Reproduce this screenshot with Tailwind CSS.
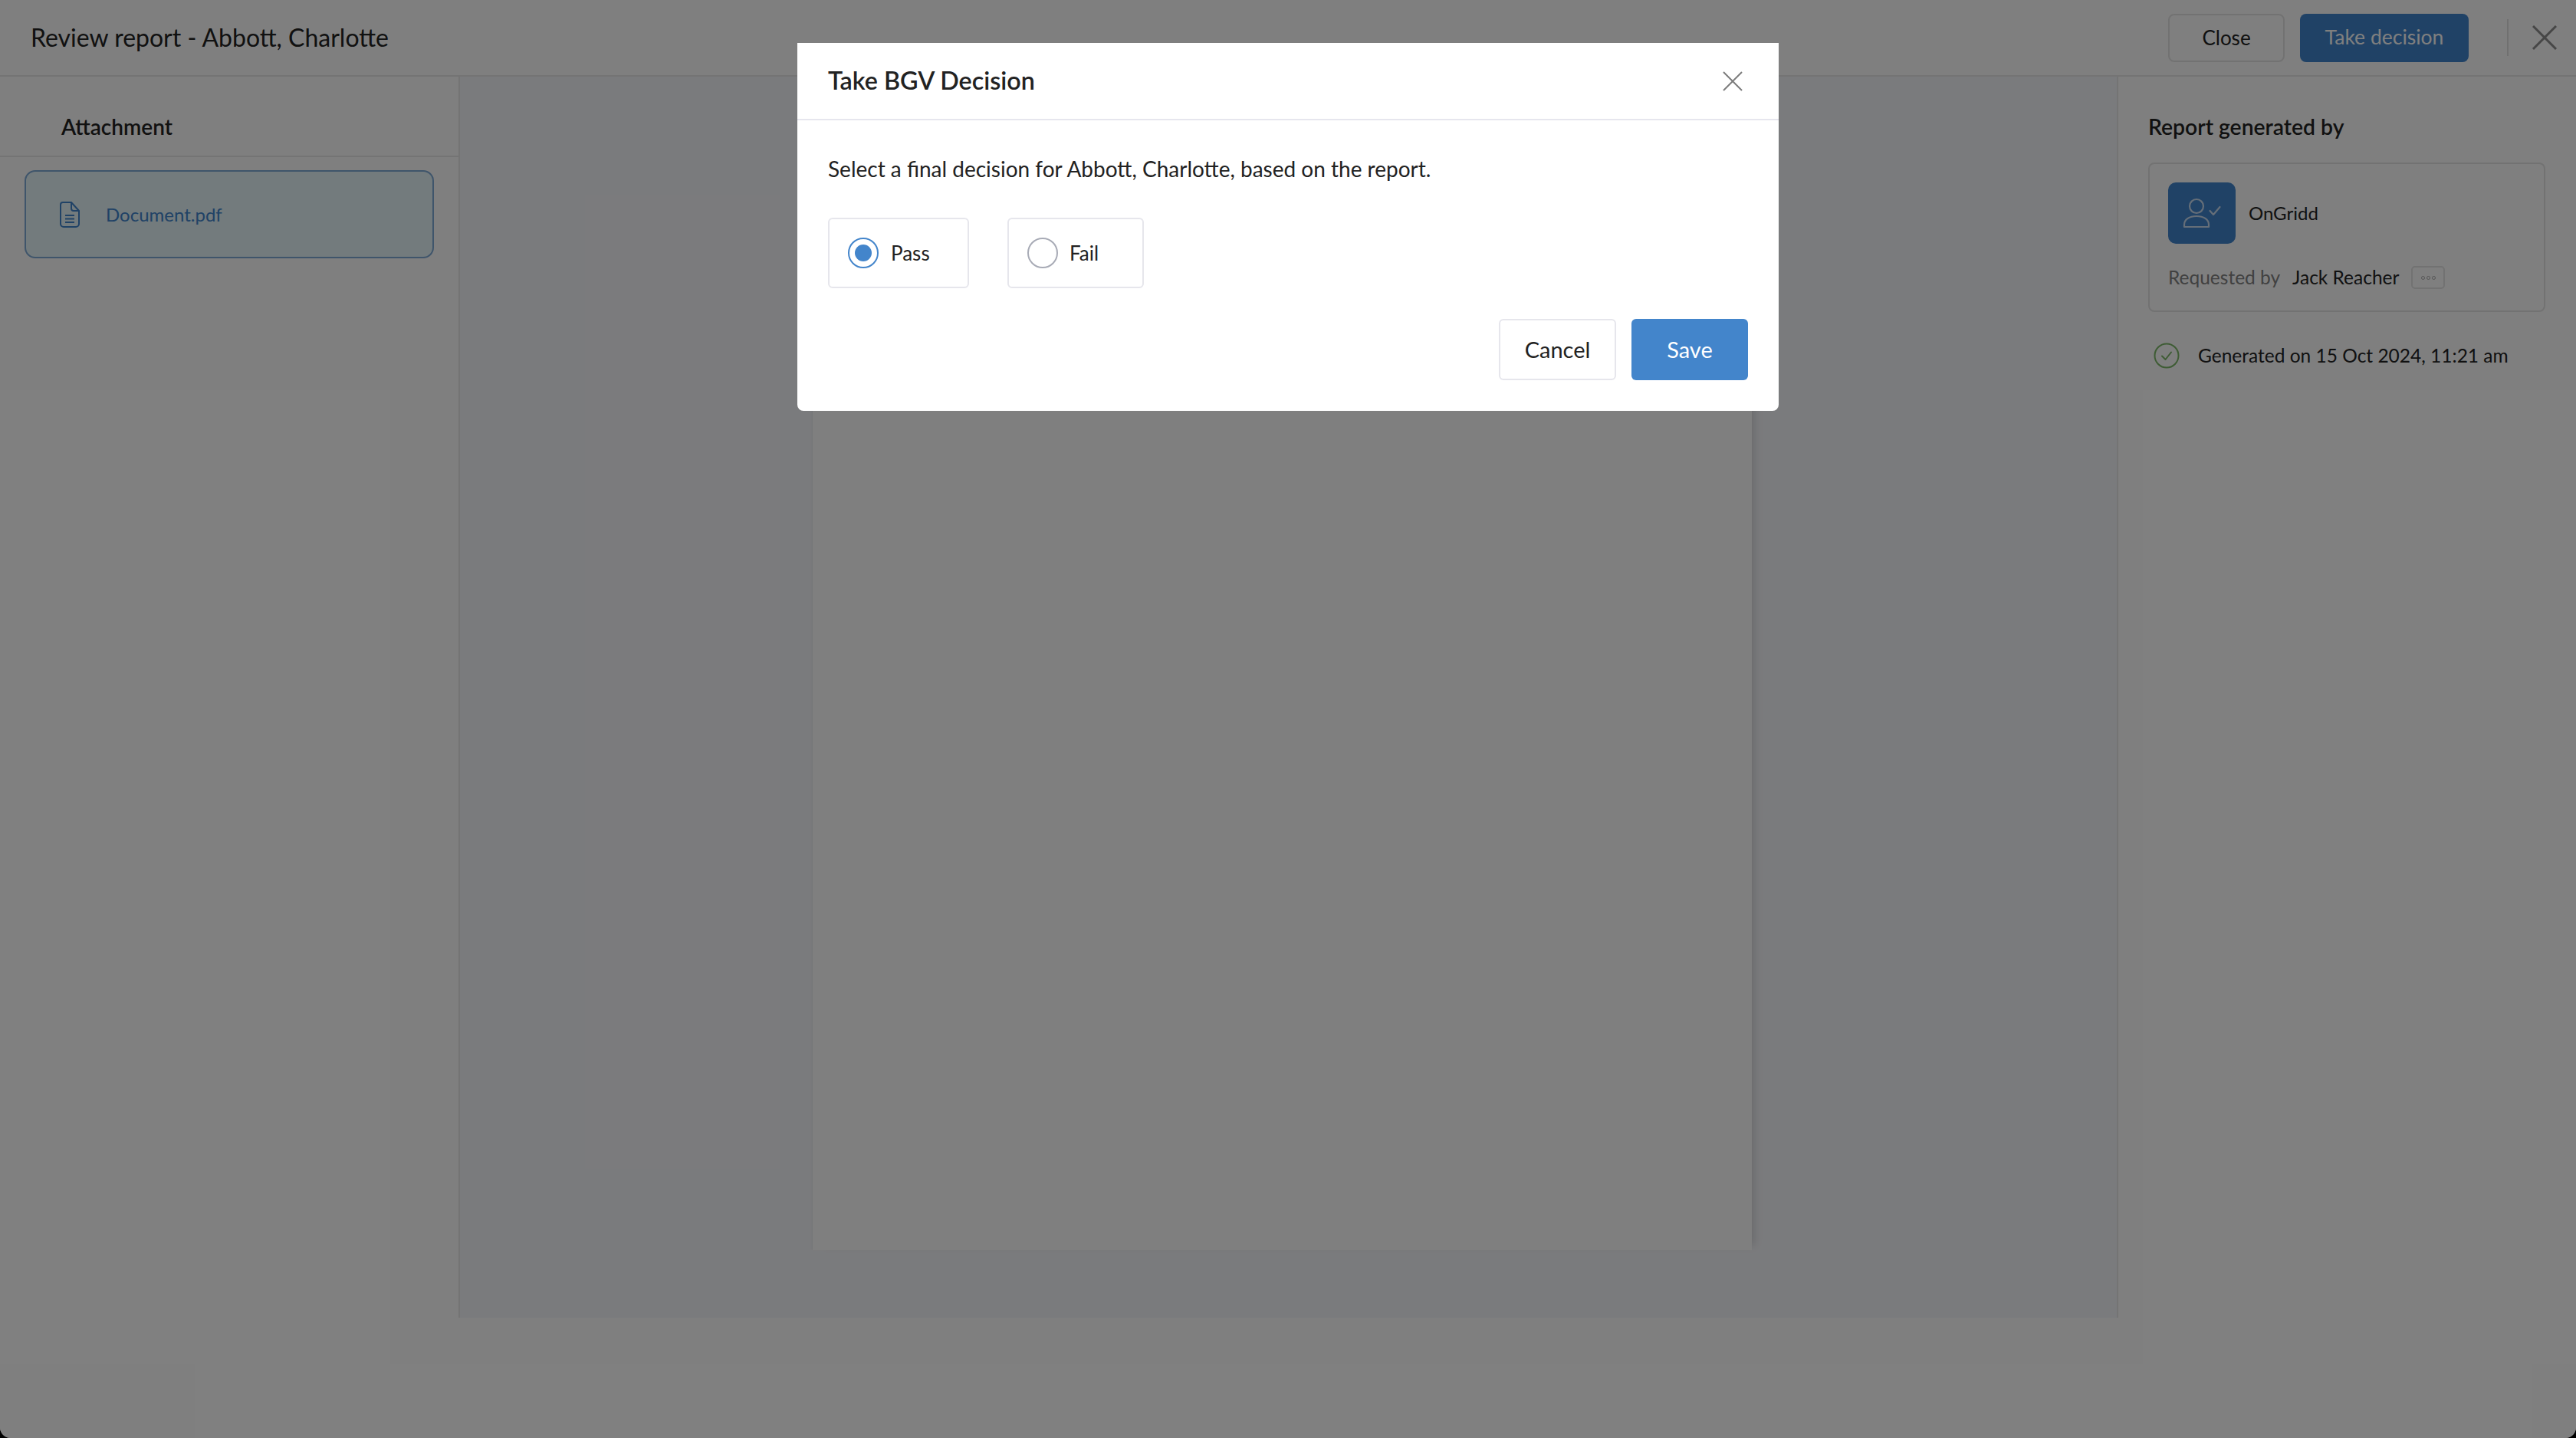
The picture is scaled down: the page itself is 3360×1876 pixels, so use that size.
<!DOCTYPE html>
<html lang="en">
  <head>
    <meta charset="UTF-8" />
    <title>Review report</title>
    <script src="https://cdn.jsdelivr.net/npm/@tailwindcss/browser@4"></script>
  </head>

  <body class="bg-black overflow-hidden font-[Lato,sans-serif]">
    <div class="relative w-[3360px] h-[1876px] bg-white rounded-b-[14px] overflow-hidden text-[#222222]">
      <!-- top bar -->
      <header class="h-[100px] border-b-2 border-[#e8e8e8] flex items-center pl-[40px] pr-[25px]">
        <h1 class="text-[32px] flex-1">Review report - Abbott, Charlotte</h1>
        <button class="w-[152px] h-[63px] border-2 border-[#e4e4e4] rounded-[8px] text-[26px]">Close</button>
        <button class="ml-[20px] w-[220px] h-[63px] bg-[#4084cc] rounded-[8px] text-[26.5px] text-white">Take decision</button>
        <div class="ml-[50px] w-[2px] h-[48px] bg-[#e0e0e0]"></div>
        <svg class="ml-[31px]" width="32" height="32" viewBox="0 0 32 32" fill="none" stroke="#8c8c8c" stroke-width="3">
          <path d="M1 1 L31 31 M31 1 L1 31" />
        </svg>
      </header>

      <div class="flex h-[1619px]">
        <!-- attachments -->
        <aside class="w-[600px] border-r-2 border-[#e8e8e8]">
          <div class="h-[105px] border-b-2 border-[#e8e8e8] pl-[80px] pt-[26px] flex items-center">
            <h2 class="text-[28px] font-semibold">Attachment</h2>
          </div>
          <div class="mx-[32px] mt-[17px] h-[115px] w-[534px] rounded-[14px] border-2 border-[#7eaad6] bg-[#e6f6fa] flex items-center pl-[44px] text-[#4084cc]">
            <svg width="26" height="34" viewBox="0 0 26 34" fill="none" stroke="#4084cc" stroke-width="2">
              <path d="M4 1 H15 L25 12 V29 a4 4 0 0 1 -4 4 H5 a4 4 0 0 1 -4 -4 V4 a3 3 0 0 1 3 -3 Z" />
              <path d="M15 1 V9 a3 3 0 0 0 3 3 H25" />
              <path d="M7 18 H19 M7 22.5 H19 M7 27 H19" />
            </svg>
            <span class="ml-[34px] text-[24px]">Document.pdf</span>
          </div>
        </aside>

        <!-- document preview -->
        <main class="flex-1 bg-[#f5f6fa] pt-[60px] pl-[460px]">
          <div class="w-[1225px] h-[1471px] bg-white shadow-[10px_0_10px_-6px_rgba(0,0,0,0.12),-2px_0_2px_-1px_rgba(0,0,0,0.06)]"></div>
        </main>

        <!-- report details -->
        <aside class="w-[599px] border-l-2 border-[#e8e8e8] pl-[39px]">
          <h2 class="h-[112px] pt-[18px] flex items-center text-[28.3px] font-semibold">Report generated by</h2>
          <div class="w-[518px] h-[195px] border-2 border-[#e4e4e4] rounded-[8px] pt-[24px] pl-[24px]">
            <div class="flex items-center">
              <div class="w-[88px] h-[80px] bg-[#4084cc] rounded-[10px]">
                <svg width="88" height="80" viewBox="0 0 88 80" fill="none" stroke="#ffffff" stroke-opacity="0.72" stroke-width="2.2" stroke-linecap="round" stroke-linejoin="round">
                  <circle cx="37" cy="31" r="9" />
                  <path d="M21 58 V55 C21 48 28 44 37 44 C46 44 53 48 53 55 V58 Z" />
                  <path d="M54.5 37 L59 42 L67.5 32" />
                </svg>
              </div>
              <span class="ml-[17px] text-[24px]">OnGridd</span>
            </div>
            <div class="mt-[26px] flex items-center text-[24.5px]">
              <span class="text-[#828282]">Requested by</span>
              <span class="ml-[16px]">Jack Reacher</span>
              <div class="ml-[16px] w-[44px] h-[30px] border-2 border-[#e4e4e4] rounded-[5px] flex items-center justify-center gap-[2px]">
                <i class="w-[5px] h-[5px] rounded-full border border-[#a8a8a8]"></i>
                <i class="w-[5px] h-[5px] rounded-full border border-[#a8a8a8]"></i>
                <i class="w-[5px] h-[5px] rounded-full border border-[#a8a8a8]"></i>
              </div>
            </div>
          </div>
          <div class="mt-[39px] ml-[7px] flex items-center">
            <svg width="34" height="34" viewBox="0 0 34 34" fill="none" stroke="#7cb868" stroke-width="2" stroke-linecap="round" stroke-linejoin="round">
              <circle cx="17" cy="17" r="15.5" />
              <path d="M11 17.5 L15.5 22 L23 12.5" />
            </svg>
            <span class="ml-[24px] text-[24.5px]">Generated on 15 Oct 2024, 11:21 am</span>
          </div>
        </aside>
      </div>

      <!-- scrim -->
      <div class="absolute inset-0 bg-black/50"></div>

      <!-- decision dialog -->
      <div class="absolute inset-x-0 top-[56px] flex justify-center">
        <div class="w-[1280px] h-[480px] bg-white rounded-b-[8px] text-[#222222]">
          <div class="h-[101px] border-b-2 border-[#e6e6ee] flex items-center justify-between pl-[40px] pr-[47px]">
            <h2 class="text-[32.3px] font-semibold">Take BGV Decision</h2>
            <svg width="26" height="26" viewBox="0 0 26 26" fill="none" stroke="#7c7c7c" stroke-width="2">
              <path d="M1 1 L25 25 M25 1 L1 25" />
            </svg>
          </div>
          <div class="px-[40px] pt-[45px]">
            <p class="text-[28px] leading-[36px]">Select a final decision for Abbott, Charlotte, based on the report.</p>
            <div class="mt-[46px] flex gap-[50px]">
              <label class="w-[184px] h-[92px] border-2 border-[#e6e6ec] rounded-[6px] flex items-center pl-[24px]">
                <span class="w-[40px] h-[40px] rounded-full border-2 border-[#4385cb] flex items-center justify-center">
                  <span class="w-[22px] h-[22px] rounded-full bg-[#4385cb]"></span>
                </span>
                <span class="ml-[16px] text-[26px]">Pass</span>
              </label>
              <label class="w-[178px] h-[92px] border-2 border-[#e6e6ec] rounded-[6px] flex items-center pl-[24px]">
                <span class="w-[40px] h-[40px] rounded-full border-2 border-[#a8abb6]"></span>
                <span class="ml-[15px] text-[26px]">Fail</span>
              </label>
            </div>
            <div class="mt-[40px] flex justify-end gap-[20px]">
              <button class="w-[153px] h-[80px] border-2 border-[#e6e6ec] rounded-[6px] text-[29px]">Cancel</button>
              <button class="w-[152px] h-[80px] bg-[#4385cb] rounded-[6px] text-[29px] text-white">Save</button>
            </div>
          </div>
        </div>
      </div>
    </div>
  </body>
</html>
